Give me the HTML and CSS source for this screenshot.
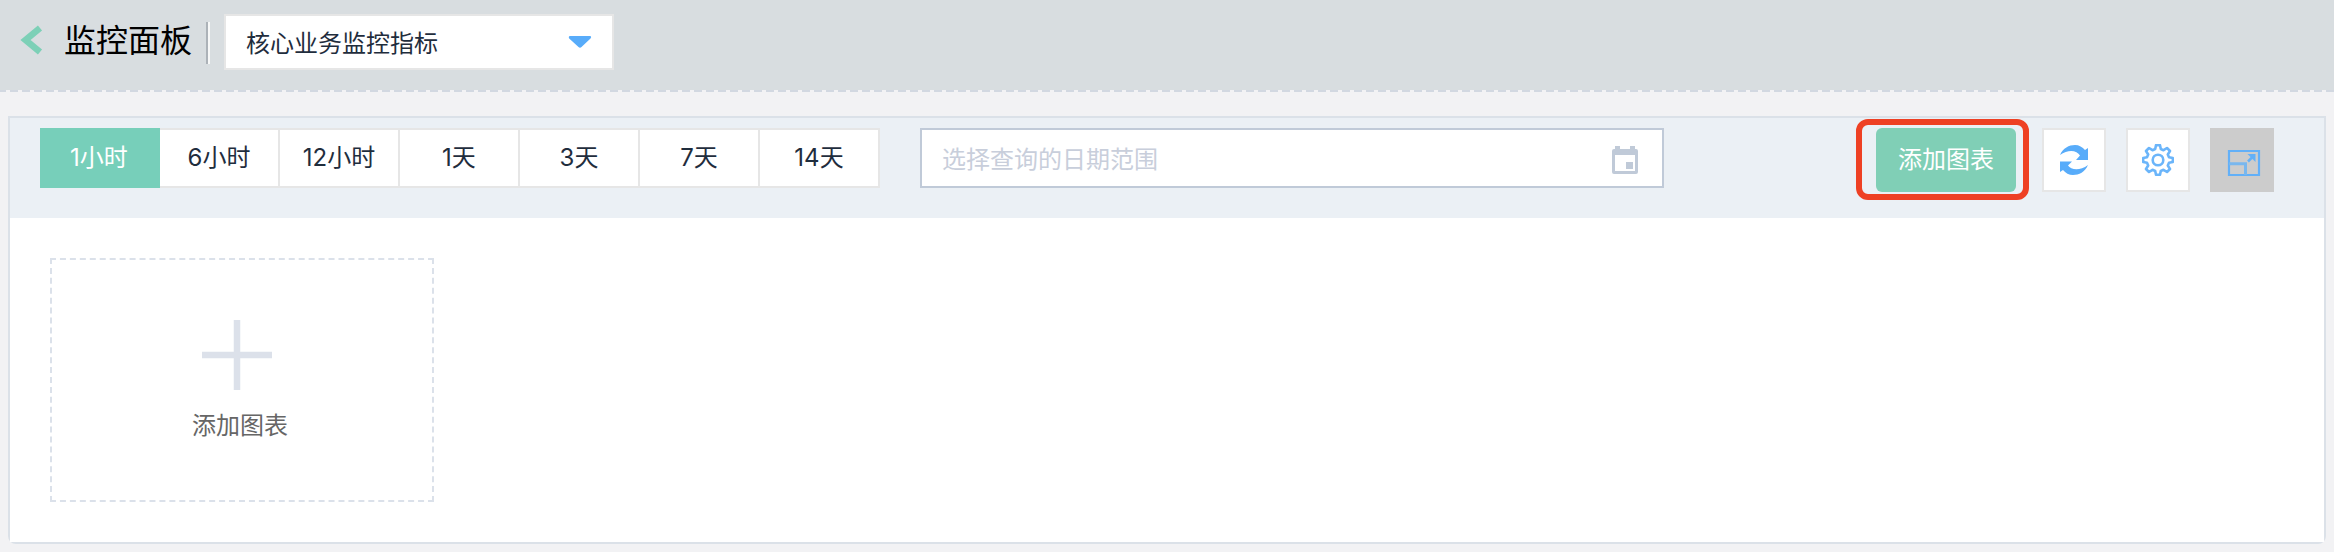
FILE: index.html
```html
<!DOCTYPE html>
<html lang="zh-CN">
<head>
<meta charset="utf-8">
<title>监控面板</title>
<link rel="stylesheet" href="styles.css">
</head>
<body>
<header class="topbar">
  <svg class="back" width="24" height="32" viewBox="0 0 24 32"><path d="M20 4L5.500 16L20 28" fill="none" stroke="#7dd0b7" stroke-width="6.500"/></svg>
  <h1 class="title">监控面板</h1>
  <span class="divider"></span>
  <div class="select">
    <span>核心业务监控指标</span>
    <svg width="24" height="14" viewBox="0 0 24 14"><path d="M2 1H22Q24 1.500 22.500 3.500L13.500 12Q12 13.500 10.500 12L1.200 3.500Q0 1.500 2 1Z" fill="#58acfa"/></svg>
  </div>
</header>
<main class="panel">
  <div class="toolbar">
    <nav class="tabs">
      <button class="tab active">1小时</button>
      <button class="tab">6小时</button>
      <button class="tab">12小时</button>
      <button class="tab">1天</button>
      <button class="tab">3天</button>
      <button class="tab">7天</button>
      <button class="tab">14天</button>
    </nav>
    <div class="date">
      <span>选择查询的日期范围</span>
      <svg width="26" height="30" viewBox="0 0 26 30"><path fill="#c0cad8" fill-rule="evenodd" d="M3 1H8V4H18V1H23V4H24Q26 4 26 6V27Q26 29 24 29H2Q0 29 0 27V6Q0 4 2 4H3ZM3 10V26H23V10ZM14 17H21V24H14Z"/></svg>
    </div>
    <div class="actions">
      <div class="add-wrap"><button class="add">添加图表</button></div>
      <button class="tool"><svg width="30" height="32" viewBox="0 0 30 32" fill="#58acfa"><path d="M1 11C4 4 10 1 16 1C20 1 23.500 3 26 6L29 4V16H17L21 11.500C18 6 9 5 1 11Z"/><path d="M29 21C26 28 20 31 14 31C10 31 6.500 29 4 26L1 28V17.500H13L9 21.500C12 26 21 27 29 21Z"/></svg></button>
      <button class="tool"><svg width="32" height="32" viewBox="0 0 32 32" fill="none" stroke="#6bb5fa" stroke-width="2.600"><path stroke-linejoin="round" d="M14 1.200H18L18.800 5L21.500 6.200L25 4L28 7L25.800 10.500L27 13.200L30.800 14V18L27 18.800L25.800 21.500L28 25L25 28L21.500 25.800L18.800 27L18 30.800H14L13.200 27L10.500 25.800L7 28L4 25L6.200 21.500L5 18.800L1.200 18V14L5 13.200L6.200 10.500L4 7L7 4L10.500 6.200L13.200 5Z"/><circle cx="16" cy="16" r="5.300"/></svg></button>
      <button class="tool expand"><svg width="34" height="28" viewBox="0 0 34 28" fill="none" stroke="#62b0f8" stroke-width="2.200"><path d="M2 2H32V26H2Z"/><path d="M2 14.800H18.500V26" stroke="#78b7ee" stroke-width="3"/><path d="M21 12.500L26 7.500" stroke-width="2.500"/><path d="M20.500 5H28.500V13Z" fill="#62b0f8" stroke="none"/></svg></button>
    </div>
  </div>
  <div class="board">
    <div class="add-card">
      <svg width="70" height="70" viewBox="0 0 70 70"><path d="M0 35H70M35 0V70" stroke="#dce1ea" stroke-width="6.500"/></svg>
      <span>添加图表</span>
    </div>
  </div>
</main>
</body>
</html>
```
FILE: styles.css
```css
* { box-sizing: border-box; }
body {
  margin: 0;
  height: 552px;
  overflow: hidden;
  background: #f2f2f4;
  color: #1f2d3d;
  font: 24px/34px Inter, "Noto Sans CJK SC", sans-serif;
}
button { padding: 0; font: inherit; color: inherit; }
svg { display: block; flex: none; }
.topbar {
  display: flex;
  align-items: flex-start;
  height: 92px;
  padding-left: 20px;
  background: repeating-linear-gradient(90deg, #d2d8e1 0 6px, #f2f2f4 6px 10px, #d2d8e1 10px 12px) 0 90px / 100% 2px no-repeat, #d8dde0;
}
.back { margin-top: 24px; }
.title { margin: 18px 0 0 20px; width: 128px; font-size: 32px; line-height: 46px; font-weight: 400; color: #000; white-space: nowrap; }
.divider { width: 4px; height: 42px; margin: 22px 14px 0; border-left: 2px solid #acb2b8; border-right: 2px solid #f7f8f8; }
.select {
  display: flex;
  align-items: center;
  justify-content: space-between;
  width: 390px;
  height: 56px;
  margin-top: 14px;
  padding: 3px 20px 0 20px;
  border: 2px solid #e6e6e6;
  background: #fff;
}
.select svg { margin-top: -4px; }
.panel { height: 428px; margin: 24px 8px 0; border: 2px solid #dbe1e8; border-radius: 0 0 8px 8px; background: #fff; }
.toolbar { display: flex; align-items: flex-start; height: 100px; padding: 10px 50px 0 30px; background: #ebf0f5; }
.tabs { display: flex; }
.tab { width: 120px; height: 60px; border: solid #e6e6e6; border-width: 2px 2px 2px 0; background: #fff; }
.active { border-color: #77cfba; background: #77cfba; color: #fff; }
.date {
  display: flex;
  align-items: center;
  justify-content: space-between;
  width: 744px;
  height: 60px;
  margin-left: 40px;
  padding: 3px 24px 0 20px;
  border: 2px solid #c0cad8;
  background: #fff;
  color: #c8cedb;
}
.actions { display: flex; align-items: flex-start; gap: 20px; margin-left: auto; }
.add-wrap { margin: -9px -7px 0 0; padding: 3px 7px 2px 14px; border: 6px solid #ee4023; border-radius: 12px; }
.add { display: block; width: 140px; height: 64px; border: 0; border-radius: 6px; background: #80cfb6; color: #fff; }
.tool { display: flex; align-items: center; justify-content: center; width: 64px; height: 64px; border: 2px solid #e6e6e6; background: #fff; }
.expand { border-color: #ccc; background: #ccc; padding: 6px 0 0 4px; }
.board { height: 324px; padding: 40px; background: #fff; }
.add-card {
  display: flex;
  flex-direction: column;
  align-items: center;
  width: 384px;
  height: 244px;
  padding-top: 60px;
  border: 2px dashed #dbe1ea;
  color: #666;
}
.add-card svg { margin-left: -10px; }
.add-card span { margin: 19px 4px 0 0; }
```
